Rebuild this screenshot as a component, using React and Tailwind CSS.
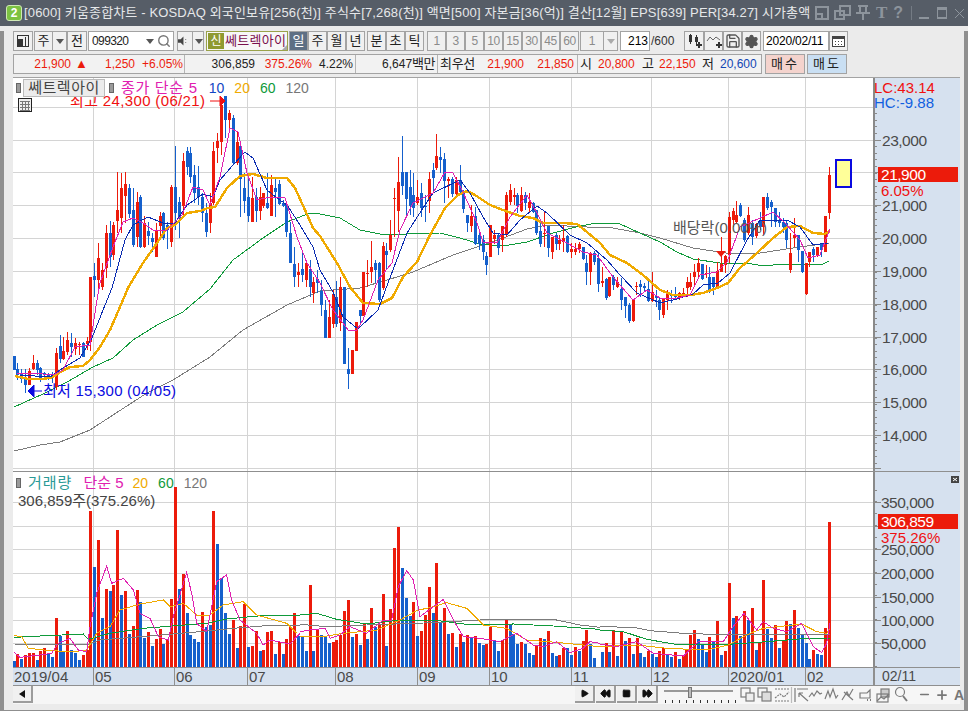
import { Search, Save, Settings, Play, Rewind, Square, FastForward, Minus, Plus } from 'lucide-react'

const RED = '#ec1b0b'
const BLUE = '#1560cc'
const ORANGE = '#f0aa00'
const GREEN = '#0f9a3a'
const GRAY = '#7c7c7c'
const NAVY = '#0a2bb0'
const PINK = '#e020b0'

// candles as they read in the 3x crops: [x, red?, bodyTop, bodyBottom, wickTop, wickBottom]
const candles7 = [[43,0,228,270,228,270],[52,0,268,285,250,300],[64,0,278,297,268,310],[76,0,295,315,268,340],[88,1,272,315,265,315],[100,1,250,268,225,270],[112,0,250,270,240,285],[121,0,265,300,262,305],[133,0,280,282,275,300],[145,0,285,297,280,300],[157,0,282,290,275,310],[169,1,220,320,205,330],[181,0,198,236,165,250],[190,1,212,236,170,240],[202,1,180,215,155,225],[214,0,190,200,160,230],[226,1,190,207,175,225],[238,1,192,194,185,225],[250,0,190,230,185,232],[262,1,183,192,170,210],[271,1,-10,185,-10,212]]
const candles6 = [[283,0,558,570,520,620],[295,1,505,570,460,600],[307,1,540,590,520,600],[319,1,430,535,405,565],[331,0,430,500,393,530],[340,1,405,495,395,510],[352,1,360,393,245,430],[364,1,293,385,250,430],[376,1,282,318,245,400],[388,0,295,372,283,385],[400,0,360,465,295,470],[412,1,336,440,307,470],[421,0,322,470,315,475],[433,1,400,470,378,475],[445,0,422,438,395,465],[457,0,445,455,430,485],[469,1,420,500,400,500],[481,1,378,408,365,445],[490,0,370,445,365,450],[502,0,405,420,395,478],[514,1,292,455,285,470],[526,0,290,370,168,420],[538,0,336,385,320,445],[550,1,213,348,188,380],[562,0,182,230,170,255],[571,0,190,262,170,280],[583,0,255,310,225,340],[595,0,292,320,228,345],[607,0,322,370,310,395],[619,0,370,425,340,440],[631,1,338,400,310,430],[640,1,183,340,155,345],[652,1,153,175,130,218],[664,1,45,155,20,195],[676,0,18,90,18,145],[688,1,70,90,60,130],[700,0,85,218,75,225],[712,1,155,218,125,225],[721,0,168,268,155,380],[733,0,295,332,250,370],[745,0,322,378,255,395],[757,1,325,395,262,395],[769,0,322,362,295,395],[781,1,320,362,290,390],[790,1,310,348,310,355],[802,0,340,355,248,358],[814,1,285,378,255,378],[826,0,295,305,265,380],[838,0,282,342,270,345],[850,0,340,348,330,350],[859,0,345,425,340,440],[871,0,430,520,395,520],[883,0,522,560,470,592],[895,1,545,555,520,590],[907,0,538,555,483,575],[919,1,520,570,518,590],[931,0,538,590,510,620],[940,1,575,610,560,640]]
const candles11 = [[7,0,27,38,0,70],[19,0,62,105,30,138],[31,0,120,204,90,204],[43,1,141,204,90,204],[55,1,72,162,60,175],[64,0,80,162,33,172],[76,1,52,160,20,182],[88,0,52,282,52,282],[100,0,297,312,234,357],[112,1,240,312,240,312],[124,1,156,242,156,242],[136,0,120,138,120,165],[145,1,6,138,6,138]]
const candles8 = [[142,1,458,459,420,500],[154,1,440,455,363,490],[166,0,430,450,420,490],[178,0,430,540,425,545],[190,1,378,505,365,510],[199,0,393,405,370,450],[211,1,345,390,300,395],[223,1,234,236,205,350],[235,1,187,272,112,335],[247,0,155,197,48,225],[259,0,155,237,155,285],[271,0,202,257,150,285],[280,0,225,265,160,290],[292,1,232,250,180,255],[304,0,220,265,190,290],[316,0,259,261,225,305],[328,1,178,243,155,280],[340,0,150,175,130,220],[349,1,108,145,42,150],[361,0,112,120,82,160],[373,0,118,182,100,248],[385,1,178,182,170,235],[397,0,178,222,170,230],[409,1,180,222,170,230],[421,0,180,215,135,218],[430,0,215,267,210,280],[442,0,285,310,285,335],[454,1,288,318,255,335],[466,0,288,372,260,375],[478,0,345,372,340,390],[490,0,360,395,345,420],[499,0,408,435,395,465],[511,1,315,410,315,410],[523,1,345,358,330,372],[535,0,345,385,340,405],[547,1,318,360,318,395],[559,1,225,345,215,350],[571,1,210,245,193,255],[583,1,226,230,205,255],[592,0,225,258,220,280],[604,1,225,272,202,275],[616,0,225,250,215,270],[628,1,245,265,220,275],[640,0,248,275,245,280],[649,0,270,340,270,345],[661,0,333,372,310,380],[673,1,339,341,275,380],[685,0,318,385,318,410],[697,1,352,395,350,418],[709,0,345,372,340,390],[718,1,360,372,345,390],[730,1,355,365,315,395],[742,0,348,395,345,400],[754,1,388,395,370,415],[766,1,388,396,370,405],[778,1,372,388,365,400],[790,0,382,417,380,420],[799,0,430,455,405,495],[811,1,400,455,395,495],[823,0,398,425,393,435],[835,0,415,493,400,515],[847,1,483,490,440,500],[859,0,477,533,475,540],[868,1,472,528,470,530],[880,0,472,495,465,510],[892,1,487,500,470,505],[904,0,507,540,475,570],[916,0,532,557,530,595],[928,0,555,603,550,610],[940,1,540,603,538,605],[949,1,499,501,485,525],[961,0,492,500,480,530],[973,0,498,503,490,515],[985,0,507,542,482,545],[997,1,515,542,457,545],[1009,0,528,534,510,560],[1018,0,540,570,530,600]]
const candles5 = [[10,1,475,525,475,535],[22,1,460,480,450,510],[34,0,462,468,450,490],[46,0,465,470,440,480],[58,1,460,473,455,480],[70,1,458,468,445,470],[82,1,425,445,410,470],[91,1,425,440,400,450],[103,1,395,410,373,440],[115,1,370,395,355,410],[127,0,372,418,372,420],[139,1,398,402,375,415],[148,0,410,457,380,460],[160,0,412,440,410,465],[172,1,393,443,365,445],[184,1,372,395,290,395],[196,1,348,375,345,400],[208,1,230,345,215,368],[220,1,212,240,205,262],[229,1,225,245,182,250],[241,0,195,228,190,230],[253,0,240,300,235,305],[265,1,225,280,202,285],[277,0,250,290,240,315],[289,1,252,288,250,295],[301,0,240,262,215,270],[310,1,170,260,170,285],[322,0,170,205,158,210],[334,0,185,200,180,260],[346,0,205,245,205,260],[358,0,240,250,215,260],[370,0,245,262,235,280],[379,0,250,300,240,325],[391,1,340,390,280,398],[403,1,285,295,235,320],[415,0,285,330,285,365],[427,0,333,397,333,400],[439,1,370,463,370,465],[448,1,335,365,335,380],[460,0,328,345,320,365],[472,1,320,345,320,350],[484,0,310,330,310,350],[496,1,228,335,228,335],[508,1,105,218,82,238]]

const toReal = (list, ox, oy) => list.map(([x, red, t, b, wt, wb]) => [
  Math.round(ox + x / 3), red, Math.round(oy + t / 3), Math.round(oy + b / 3), Math.round(oy + wt / 3), Math.round(oy + wb / 3),
])

const candles = [
  ...toReal(candles7, 0, 280),
  ...toReal(candles6, 0, 90),
  ...toReal(candles11, 315, 270),
  ...toReal(candles8, 320, 120),
  ...toReal(candles5, 660, 140),
]

const ma20 = '15,376 28,379 43,379 53,377 62,371 70,367 83,366 90,360 100,347 110,330 120,307 128,288 143,263 157,243 167,228 175,225 187,213 200,211 208,208 215,207 227,188 240,176 253,174 267,178 287,178 295,188 305,210 313,228 320,236 337,263 350,287 363,303 380,304 392,298 403,277 417,262 430,235 445,208 458,195 467,191 475,195 490,205 503,210 520,216 533,218 543,223 563,223 577,224 587,232 600,243 610,255 627,263 643,275 660,290 673,295 690,295 703,293 717,288 728,283 740,268 757,253 773,238 787,227 800,226 813,233 825,234 830,231'
const ma60 = '14,407 43,394 67,382 93,367 113,358 133,340 157,325 183,312 197,300 210,289 233,260 263,238 287,222 310,213 320,214 340,218 360,230 380,234 407,234 440,233 460,238 480,244 503,246 527,242 553,233 580,226 597,223 620,224 640,233 660,242 677,252 693,259 720,263 747,263 763,266 783,264 823,264 829,261'
const ma120 = '14,451 40,445 60,442 90,430 113,415 147,393 173,380 210,357 243,330 287,305 320,291 360,288 387,280 413,272 453,255 480,246 503,238 527,229 547,225 587,227 613,228 640,233 660,238 693,248 733,254 760,253 793,248 829,243'
const ma10 = '20,375 50,377 63,368 80,358 92,338 103,310 112,288 125,240 133,225 148,217 163,223 175,223 187,205 203,194 213,197 220,180 233,165 245,152 253,158 267,190 277,198 287,205 300,225 313,247 320,270 333,292 343,317 358,329 378,310 388,283 407,233 423,208 433,193 460,180 470,193 483,217 493,233 507,235 520,220 537,206 547,213 570,235 587,243 607,260 620,275 637,293 660,303 677,299 693,294 703,285 718,283 730,273 747,240 760,220 787,220 800,227 813,245 828,243'
const ma5 = '17,373 33,373 53,375 63,370 75,347 90,345 97,300 100,283 113,247 123,222 133,218 143,223 153,230 167,230 182,215 193,187 203,190 210,205 220,177 230,128 238,132 247,173 257,200 270,197 285,198 297,237 307,263 320,283 333,310 348,330 357,330 363,320 378,280 392,263 400,230 413,203 433,193 445,172 453,173 463,192 477,223 483,242 497,243 510,217 527,195 537,213 547,233 567,243 583,252 597,255 613,277 633,300 647,290 660,298 673,299 690,295 700,275 717,272 727,262 740,227 760,218 773,212 785,223 800,240 808,258 820,255 830,229'

// volume bars, 3x crop coordinates: [x, red?, top]
const vol3 = [[43,0,603],[52,1,582],[64,0,597],[76,1,585],[88,1,579],[100,1,579],[112,0,600],[121,1,573],[133,1,564],[145,0,582],[157,0,591],[169,1,474],[181,0,527],[190,0,572],[202,1,513],[214,0,570],[226,0,579],[238,0,600],[250,1,585],[262,1,570],[271,1,153],[283,0,321],[295,1,240],[307,0,474],[319,1,387],[331,0,393],[340,1,375],[352,1,210],[364,0,405],[376,1,393],[388,0,522],[400,1,498],[412,1,390],[421,0,427],[433,0,533],[445,1,516],[457,0,558],[469,1,537],[481,1,507],[490,0,552],[502,1,539],[514,1,417],[526,1,80],[538,0,387],[550,1,342],[562,0,459],[571,0,525],[583,0,537],[595,0,546],[607,1,456],[619,0,501],[631,0,495],[640,1,153],[652,0,252],[664,0,354],[676,0,459],[688,0,522],[700,1,480],[712,0,564],[721,1,498],[733,1,432],[745,0,561],[757,1,558],[769,1,513],[781,0,573],[790,1,570],[802,1,516],[814,1,513],[826,0,582],[838,1,546],[850,0,582],[859,1,537],[871,1,501],[883,1,459],[895,0,528]]
const vol9 = [[7,0,410],[19,0,453],[31,1,255],[40,0,453],[52,1,387],[64,0,405],[76,0,408],[88,0,429],[100,1,427],[109,1,420],[121,1,405],[133,1,333],[145,1,300],[157,0,411],[169,1,402],[181,0,435],[193,1,372],[202,0,417],[214,1,324],[226,0,381],[238,1,375],[250,1,282],[259,0,438],[271,1,327],[283,1,144],[295,1,81],[307,0,204],[319,0,294],[331,0,348],[340,1,306],[352,0,408],[364,1,393],[376,1,345],[388,1,261],[400,0,339],[409,1,189],[421,0,366],[433,1,324],[445,0,402],[457,1,399],[469,0,441],[481,1,402],[490,0,426],[502,1,405],[514,0,414],[526,1,408],[538,0,429],[550,0,435],[559,1,432],[571,1,381],[583,0,420],[595,0,453],[607,1,420],[619,1,360],[631,0,372],[640,0,402],[652,0,432],[664,1,426],[676,0,432],[688,0,459],[700,0,465],[709,1,435],[721,1,414],[733,0,417],[745,1,393],[757,0,459],[769,0,468],[778,1,465],[790,1,444],[802,0,444],[814,0,465],[826,1,441],[838,0,453],[850,1,423],[859,1,390],[871,0,432],[883,0,474]]
const vol10 = [[7,0,456],[19,1,429],[28,0,456],[40,1,390],[52,0,468],[64,1,393],[76,0,423],[88,1,414],[100,0,462],[112,1,414],[121,0,459],[133,0,471],[145,1,453],[157,0,462],[169,0,471],[178,1,453],[190,1,444],[202,0,465],[214,0,471],[226,1,456],[238,0,477],[250,1,465],[259,1,450],[271,1,405],[283,1,390],[295,0,417],[307,0,435],[319,0,456],[328,1,411],[340,0,426],[352,1,363],[364,0,465],[376,1,453],[388,1,249],[400,0,354],[409,1,348],[421,0,408],[433,1,333],[445,0,360],[457,1,324],[469,0,450],[478,1,426],[490,1,240],[502,0,387],[514,0,414],[526,1,375],[538,0,444],[550,1,423],[559,1,363],[571,0,372],[583,1,330],[595,0,384],[607,0,402],[619,0,429],[628,0,477],[640,1,450],[652,0,462],[664,0,465],[676,1,384],[688,1,66]]

const barsOf = (list, ox, oy) => list.map(([x, red, t]) => [Math.round(ox + x / 3), red, Math.round(oy + t / 3)])
const volumes = [...barsOf(vol3, 0, 460), ...barsOf(vol9, 300, 500), ...barsOf(vol10, 600, 500)]

const linePts = (a, ox, oy) => a.map(([x, y]) => `${ox + x / 3},${oy + y / 3}`).join(' ')
const volLines = {
  pink: [
    [[43,578],[60,592],[120,585],[155,580],[175,550],[210,535],[235,570],[260,575],[270,500],[290,400],[320,318],[335,370],[370,355],[400,390],[420,460],[450,475],[475,530],[505,540],[520,470],[560,338],[575,400],[590,490],[620,515],[650,365],[680,345],[695,420],[720,480],[770,520],[790,555],[810,540],[870,552],[900,520]],
    [[0,395],[30,390],[75,385],[90,415],[120,405],[150,380],[200,400],[250,360],[275,360],[295,260],[320,212],[340,240],[360,350],[400,320],[430,298],[460,360],[490,410],[540,415],[600,425],[650,400],[700,435],[730,440],[770,425],[810,458],[850,445],[870,425],[900,430]],
    [[0,432],[50,440],[110,425],[160,460],[250,468],[295,425],[370,425],[395,385],[432,340],[470,390],[490,365],[520,385],[560,395],[605,370],[640,440],[665,458],[680,430],[690,370]],
  ],
  orange: [
    [[43,527],[65,530],[85,565],[150,572],[220,575],[260,570],[290,520],[330,500],[360,450],[420,432],[490,420],[510,440],[550,430],[590,465],[630,465],[670,435],[730,425],[770,465],[860,490],[890,520]],
    [[0,408],[80,408],[130,400],[230,390],[300,360],[350,332],[400,320],[440,308],[500,325],[550,375],[620,385],[680,420],[780,428],[900,440]],
    [[0,440],[110,435],[200,445],[320,450],[385,435],[450,400],[490,385],[605,372],[650,395],[680,400],[690,385]],
  ],
  green: [
    [[43,532],[120,528],[250,522],[265,538],[330,520],[430,505],[530,497],[620,490],[680,477],[750,470],[800,466],[900,466]],
    [[0,345],[50,340],[110,358],[200,372],[300,360],[400,360],[500,373],[640,372],[760,378],[900,388]],
    [[0,390],[70,395],[140,418],[240,435],[400,432],[500,425],[620,415],[690,415]],
  ],
  gray: [
    [[43,552],[260,555],[300,540],[450,528],[600,515],[700,505],[800,497],[900,497]],
    [[0,373],[80,380],[200,375],[400,368],[540,360],[760,358],[840,375],[900,382]],
    [[0,380],[100,382],[150,392],[250,400],[400,405],[690,403]],
  ],
}
const origins = [[0, 460], [300, 500], [600, 500]]

const gridX = [93, 174, 247, 335, 417, 489, 571, 651, 728, 805]
const priceY = [107, 140, 172, 205, 238, 271, 304, 337, 369, 402, 435, 468]
const volY = [502, 526, 549, 573, 597, 620, 643]
const priceLabels = [['23,000', 140], ['22,000', 172], ['21,000', 205], ['20,000', 238], ['19,000', 271], ['18,000', 304], ['17,000', 337], ['16,000', 369], ['15,000', 402], ['14,000', 435]]
const volLabels = [['350,000', 502], ['250,000', 549], ['200,000', 573], ['150,000', 597], ['100,000', 620], ['50,000', 643]]
const months = [['2019/04', 80], ['05', 81], ['06', 73], ['07', 88], ['08', 82], ['09', 72], ['10', 82], ['11', 80], ['12', 77], ['2020/01', 77], ['02', 68]]

function Btn({ children, className = '' }) {
  return <div className={`flex items-center justify-center h-5 shrink-0 bg-[#f0f0f0] border border-[#a3a3a3] text-[13px] text-[#222] ${className}`}>{children}</div>
}

function Arrow({ color = '#555' }) {
  return <div className="w-0 h-0 border-x-[4px] border-x-transparent border-t-[5px]" style={{ borderTopColor: color }} />
}

function Dot() {
  return <div className="w-[5px] h-[10px] bg-[#9a9a9a] border border-[#666]" />
}

function TitleBar() {
  return (
    <div className="h-[26px] bg-[#565d67] flex items-center pl-[6px] text-[#e6e8ea] text-[13px] whitespace-nowrap">
      <div className="w-4 h-4 shrink-0 rounded-[3px] bg-[#7cc242] border border-[#cfe8b5] flex items-center justify-center text-white text-[12px] font-bold">2</div>
      <span className="ml-[2px] w-[786px] shrink-0 tracking-[0.15px]">[0600] 키움종합차트 - KOSDAQ 외국인보유[256(천)] 주식수[7,268(천)] 액면[500] 자본금[36(억)] 결산[12월] EPS[639] PER[34.27] 시가총액</span>
      <svg width="58" height="20" viewBox="0 0 58 20" className="ml-[4px] shrink-0" fill="none" stroke="#8d949c" strokeWidth="1.5" shapeRendering="crispEdges">
        <rect x="2" y="4" width="12" height="12" />
        <path d="M2 11h6v5" />
        <rect x="26" y="3" width="10" height="9" />
        <rect x="21" y="8" width="9" height="8" />
        <path d="M44 3h10M46 3v7h6V3M42 10h14" />
        <path d="M49 10v7" />
      </svg>
      <span className="ml-[4px] text-[#8d949c] text-[17px] font-['Liberation_Serif',serif] font-bold">T</span>
      <span className="ml-[6px] text-[#8d949c] text-[16px] font-bold">?</span>
      <svg width="54" height="20" viewBox="0 0 54 20" className="ml-[7px] shrink-0" fill="none" stroke="#8d949c" shapeRendering="crispEdges">
        <path d="M1.5 3v14" stroke="#747b84" />
        <path d="M9 15h10" strokeWidth="2" />
        <rect x="27.5" y="6" width="9" height="9" strokeWidth="1.5" />
        <path d="M27 5h10" strokeWidth="2" />
        <path d="M45 6l9 9M54 6l-9 9" strokeWidth="1" shapeRendering="auto" />
      </svg>
    </div>
  )
}

function Toolbar() {
  return (
    <div className="mt-[5px] flex h-5 items-center whitespace-nowrap">
      <Btn className="w-5">
        <svg width="14" height="14" viewBox="0 0 14 14" shapeRendering="crispEdges">
          <rect x="1.5" y="1.5" width="11" height="11" fill="none" stroke="#333" />
          <rect x="2" y="5" width="5" height="7" fill="#333" />
          <path d="M9 3v9" stroke="#333" />
        </svg>
      </Btn>
      <Btn className="ml-px w-[33px]">
        <span className="flex-1 text-center">주</span>
        <span className="w-[14px] h-full flex items-center justify-center border-l border-[#a3a3a3]"><Arrow /></span>
      </Btn>
      <Btn className="w-5">전</Btn>
      <div className="ml-px h-5 w-[86px] shrink-0 flex items-center bg-white border border-[#a3a3a3] text-[12px] text-[#222]">
        <span className="pl-[3px] w-[54px] tracking-[-0.6px]">099320</span>
        <span className="w-[14px] flex justify-center"><Arrow /></span>
        <Search size={14} color="#777" strokeWidth={2.4} />
      </div>
      <Btn className="ml-[3px] w-[27px]">
        <svg width="11" height="12" viewBox="0 0 11 12" className="mr-px"><path d="M0 4h3l3-3v10L3 8H0z" fill="#444" /><path d="M8 4h1v1H8zM8 7h1v1H8z" fill="#444" /></svg>
        <span className="ml-[3px] border-l border-[#a3a3a3] h-full flex items-center pl-[2px]"><Arrow /></span>
      </Btn>
      <div className="ml-[2px] h-5 w-[82px] shrink-0 flex items-center bg-[#f7f7f7] border border-[#9aa24a] relative">
        <div className="ml-px w-4 h-4 bg-[#8f9a30] text-white text-[12px] flex items-center justify-center">신</div>
        <span className="ml-px text-[13px] text-[#7a0f4e] tracking-[0.3px]">쎄트렉아이</span>
        <div className="absolute right-0 bottom-0 w-0 h-0 border-l-[5px] border-l-transparent border-b-[5px] border-b-[#aaa]" />
      </div>
      <div className="ml-px flex">
        <Btn className="w-[19px] !bg-[#5e6f84] !text-white">일</Btn>
        <Btn className="w-[19px]">주</Btn>
        <Btn className="w-[19px]">월</Btn>
        <Btn className="w-[19px]">년</Btn>
      </div>
      <div className="ml-[2px] flex">
        <Btn className="w-[19px]">분</Btn>
        <Btn className="w-[19px]">초</Btn>
        <Btn className="w-[19px]">틱</Btn>
      </div>
      <div className="ml-[3px] flex">
        {['1', '3', '5', '10', '15', '30', '45', '60'].map(n => <Btn key={n} className="w-[19px] !text-[#8b8b8b] !text-[12px] tracking-[-0.5px]">{n}</Btn>)}
      </div>
      <Btn className="ml-px w-[38px] !text-[#8b8b8b] !text-[12px]">
        <span className="flex-1 text-center">1</span>
        <span className="w-[14px] h-full flex items-center justify-center border-l border-[#a3a3a3]"><Arrow color="#aaa" /></span>
      </Btn>
      <div className="ml-[2px] w-[30px] h-5 shrink-0 bg-white border border-[#a3a3a3] text-[12px] text-right pr-px leading-[18px]">213</div>
      <span className="ml-px w-[33px] text-[12px] text-[#333]">/600</span>
      <div className="flex">
        <Btn className="w-5">
          <svg width="16" height="14" viewBox="0 0 16 14" shapeRendering="crispEdges"><path d="M3 1h3v7H3zM9 3h3v5H9z" fill="#333" /><path d="M4.5 0v10M10.5 1v9" stroke="#333" /><path d="M10 11h6M13 8v6" stroke="#333" strokeWidth="2" /></svg>
        </Btn>
        <Btn className="w-[19px]">
          <svg width="16" height="14" viewBox="0 0 16 14"><path d="M1 7l3-4 3 3 3-3 4 3" fill="none" stroke="#666" /><path d="M10 11h6M13 8v6" stroke="#333" strokeWidth="2" /></svg>
        </Btn>
        <Btn className="w-[19px]"><Save size={16} color="#555" strokeWidth={2} /></Btn>
        <Btn className="w-[19px]"><Settings size={15} color="#555" fill="#555" strokeWidth={2} /></Btn>
      </div>
      <div className="ml-[2px] h-5 w-[66px] shrink-0 bg-white border border-[#a3a3a3] text-[12px] leading-[18px] pl-[2px] tracking-[-0.2px]">2020/02/11</div>
      <Btn className="w-[19px]">
        <svg width="13" height="12" viewBox="0 0 13 12" shapeRendering="crispEdges"><rect x="0.5" y="1.5" width="12" height="10" fill="#fff" stroke="#444" /><path d="M1 2h11v2H1z" fill="#444" /><path d="M3 6h1M6 6h1M9 6h1M3 9h1M6 9h1M9 9h1" stroke="#444" /></svg>
      </Btn>
    </div>
  )
}

function Cell({ w, color = 'text-[#ec1b0b]', right, children }) {
  return <span className={`block shrink-0 ${color} ${right ? 'text-right' : ''}`} style={{ width: w }}>{children}</span>
}

function InfoBar() {
  return (
    <div className="mt-[3px] flex h-5 items-center whitespace-nowrap">
      <div className="flex h-5 w-[749px] shrink-0 items-center bg-[#f2f2f2] border border-[#a3a3a3] text-[12px] leading-[18px]">
        <div className="flex w-[171px] h-full border-r border-[#b5b5b5]">
          <Cell w={57} right>21,900</Cell>
          <span className="ml-[4px] w-[12px] text-[#ec1b0b] text-[13px] leading-[17px]">▲</span>
          <Cell w={48} right>1,250</Cell>
          <Cell w={48} right>+6.05%</Cell>
        </div>
        <div className="flex w-[171px] h-full border-r border-[#b5b5b5]">
          <Cell w={70} color="text-[#222]" right>306,859</Cell>
          <Cell w={57} right>375.26%</Cell>
          <Cell w={41} color="text-[#222]" right>4.22%</Cell>
        </div>
        <div className="flex w-[82px] h-full border-r border-[#b5b5b5]">
          <Cell w={79} color="text-[#222]" right>6,647<span className="text-[13px] tracking-[-0.5px]">백만</span></Cell>
        </div>
        <span className="ml-[2px] w-[38px] text-[13px] text-[#222] tracking-[-0.3px]">최우선</span>
        <div className="flex h-full w-[100px] border-r border-[#b5b5b5]">
          <Cell w={46} right>21,900</Cell>
          <Cell w={50} right>21,850</Cell>
        </div>
        <span className="ml-[2px] w-[18px] text-[13px] text-[#222]">시</span>
        <Cell w={36}>20,800</Cell>
        <span className="ml-2 w-[17px] text-[13px] text-[#222]">고</span>
        <Cell w={36}>22,150</Cell>
        <span className="ml-[7px] w-[18px] text-[13px] text-[#222]">저</span>
        <Cell w={36} color="text-[#1146b4]">20,600</Cell>
      </div>
      <div className="ml-[3px] h-5 w-10 shrink-0 bg-[#f4d3cd] border border-[#a3a3a3] flex items-center justify-center text-[13px] text-[#222] tracking-[2px]">매수</div>
      <div className="ml-[2px] h-5 w-10 shrink-0 bg-[#c9dff3] border border-[#a3a3a3] flex items-center justify-center text-[13px] text-[#222] tracking-[2px]">매도</div>
    </div>
  )
}

function PricePlot() {
  return (
    <svg width="860" height="393" viewBox="13 78 860 393" className="block shrink-0">
      <g stroke="#d4d4d4" strokeWidth="1" shapeRendering="crispEdges">
        {priceY.map(y => <line key={y} x1="13" x2="873" y1={y + 0.5} y2={y + 0.5} />)}
        {gridX.map(x => <line key={x} x1={x + 0.5} x2={x + 0.5} y1="78" y2="471" />)}
      </g>
      <g fill="none" shapeRendering="crispEdges">
        <polyline points={ma120} stroke={GRAY} />
        <polyline points={ma60} stroke={GREEN} />
      </g>
      <g shapeRendering="crispEdges">
        {candles.map(([x, red, t, b, wt, wb], i) => (
          <g key={i} fill={red ? RED : BLUE}>
            <rect x={x} y={wt} width="1" height={Math.max(wb - wt, 1)} />
            <rect x={x - 1} y={t} width="3" height={Math.max(b - t, 1)} />
          </g>
        ))}
      </g>
      <g fill="none" shapeRendering="crispEdges">
        <polyline points={ma20} stroke={ORANGE} strokeWidth="2.4" />
        <polyline points={ma10} stroke={NAVY} />
        <polyline points={ma5} stroke={PINK} />
      </g>
      <text x="70" y="106" fontSize="15" fill="#f01010" textLength="135">최고 24,300 (06/21)</text>
      <path d="M210 101h10M220 96l5 5-5 5z" stroke="#f01010" fill="#f01010" />
      <path d="M42 391H34M34 385l-6 6 6 6z" stroke="#0a0ae0" fill="#0a0ae0" />
      <text x="43" y="396" fontSize="15" fill="#0a0ae0" textLength="133">최저 15,300 (04/05)</text>
      <text x="673" y="233" fontSize="15" fill="#555">배당락(0.00%)</text>
      <path d="M716 251h10l-5 6z" fill={RED} />
      <rect x="836" y="160" width="15" height="27" fill="#ffff99" stroke="#0a0ae0" strokeWidth="2" shapeRendering="crispEdges" />
    </svg>
  )
}

function PriceAxis() {
  const minor = Array.from({ length: 60 }, (_, i) => 107 + i * 6.6)
  return (
    <svg width="87" height="393" viewBox="873 78 87 393" className="block shrink-0 bg-[#d6e1ef]">
      <g stroke="#8a8a8a" shapeRendering="crispEdges">
        <line x1="873.5" x2="873.5" y1="78" y2="471" strokeWidth="2" />
        {minor.filter(y => y < 468 && y > 108).map(y => <line key={y} x1="873" x2="877" y1={y} y2={y} />)}
        {priceY.slice(1).map(y => <line key={y} x1="873" x2="881" y1={y + 0.5} y2={y + 0.5} />)}
      </g>
      <g fontSize="15.5" fill="#4a4a4a">
        {priceLabels.map(([t, y]) => <text key={t} x="882" y={y + 5.5} textLength="45">{t}</text>)}
      </g>
      <text x="874" y="93" fontSize="15" fill="#f01010">LC:43.14</text>
      <text x="874" y="108" fontSize="15" fill="#1160e0">HC:-9.88</text>
      <rect x="878" y="167" width="80" height="15" fill={RED} shapeRendering="crispEdges" />
      <text x="881" y="180" fontSize="15.5" fill="#fff" textLength="45">21,900</text>
      <text x="881" y="196" fontSize="15" fill="#f01010">6.05%</text>
    </svg>
  )
}

function VolumePlot() {
  return (
    <svg width="860" height="195" viewBox="13 472 860 195" className="block shrink-0">
      <g stroke="#d4d4d4" shapeRendering="crispEdges">
        {volY.map(y => <line key={y} x1="13" x2="873" y1={y + 0.5} y2={y + 0.5} />)}
        {gridX.map(x => <line key={x} x1={x + 0.5} x2={x + 0.5} y1="472" y2="667" />)}
      </g>
      <g shapeRendering="crispEdges">
        {volumes.map(([x, red, top], i) => (
          <rect key={i} x={x - 1} y={top} width="3" height={667 - top} fill={red ? RED : BLUE} />
        ))}
      </g>
      <g fill="none" shapeRendering="crispEdges">
        {origins.map(([ox, oy], i) => <polyline key={i} points={linePts(volLines.gray[i], ox, oy)} stroke={GRAY} />)}
        {origins.map(([ox, oy], i) => <polyline key={i} points={linePts(volLines.green[i], ox, oy)} stroke={GREEN} />)}
        {origins.map(([ox, oy], i) => <polyline key={i} points={linePts(volLines.orange[i], ox, oy)} stroke={ORANGE} />)}
        {origins.map(([ox, oy], i) => <polyline key={i} points={linePts(volLines.pink[i], ox, oy)} stroke={PINK} />)}
      </g>
    </svg>
  )
}

function VolumeAxis() {
  const minor = Array.from({ length: 16 }, (_, i) => 490 + i * 11.75)
  return (
    <svg width="87" height="195" viewBox="873 472 87 195" className="block shrink-0 bg-[#d6e1ef]">
      <g stroke="#8a8a8a" shapeRendering="crispEdges">
        <line x1="873.5" x2="873.5" y1="472" y2="667" strokeWidth="2" />
        {minor.map(y => <line key={y} x1="873" x2="877" y1={y} y2={y} />)}
        {volY.map(y => <line key={y} x1="873" x2="881" y1={y + 0.5} y2={y + 0.5} />)}
      </g>
      <g fontSize="15.5" fill="#4a4a4a">
        {volLabels.map(([t, y]) => <text key={t} x="881" y={y + 5.5} textLength={t.length === 7 ? 53 : 45}>{t}</text>)}
      </g>
      <rect x="878" y="514" width="80" height="15" fill={RED} shapeRendering="crispEdges" />
      <text x="881" y="527" fontSize="15.5" fill="#fff" textLength="53">306,859</text>
      <text x="881" y="543" fontSize="15" fill="#f01010">375.26%</text>
    </svg>
  )
}

function DateAxis() {
  return (
    <div className="flex h-[19px] bg-[#d6e1ef] border-t border-b border-[#8f8f8f] text-[15px] leading-[17px] text-[#4a4a4a]">
      {months.map(([m, w], i) => (
        <div key={m} className={`pl-px shrink-0 overflow-hidden ${i === 0 ? '' : 'border-l border-[#8f8f8f]'}`} style={{ width: w }}>{m}</div>
      ))}
      <div className="flex-1 border-l-2 border-[#8f8f8f] pl-[7px] text-[14px]">02/11</div>
    </div>
  )
}

function PlayBtn({ children }) {
  return <div className="w-5 h-[17px] shrink-0 bg-[#f0f0f0] border-r-2 border-b-2 border-[#9c9c9c] flex items-center justify-center">{children}</div>
}

function BottomBar() {
  return (
    <div className="flex h-[18px] items-start bg-[#f6f6f6]">
      <PlayBtn><svg width="6" height="8"><path d="M6 0v8L0 4z" fill="#111" /></svg></PlayBtn>
      <div className="w-[542px] shrink-0" />
      <div className="flex gap-px shrink-0">
        <PlayBtn><Play size={9} fill="#111" color="#111" /></PlayBtn>
        <PlayBtn><Rewind size={11} fill="#111" color="#111" /></PlayBtn>
        <PlayBtn><Square size={9} fill="#111" color="#111" /></PlayBtn>
        <PlayBtn><FastForward size={11} fill="#111" color="#111" /></PlayBtn>
      </div>
      <svg width="74" height="18" viewBox="0 0 74 18" className="ml-[5px] shrink-0" shapeRendering="crispEdges">
        <rect x="1" y="4" width="69" height="2" fill="#999" />
        <rect x="25" y="1" width="3" height="10" fill="#bbb" stroke="#777" />
        {Array.from({ length: 11 }, (_, i) => <rect key={i} x={2 + i * 7} y="14" width="1" height="3" fill="#333" />)}
      </svg>
      <svg width="174" height="18" viewBox="0 0 174 18" className="shrink-0" fill="none" stroke="#7b7b7b" strokeWidth="1.2">
        <rect x="4" y="2" width="9" height="9" /><rect x="9" y="7" width="8" height="8" fill="#eee" />
        <rect x="21" y="2" width="9" height="9" /><rect x="25" y="6" width="9" height="9" fill="#ddd" />
        <path d="M38 12l5-4 4 3 5-5M38 3h14M38 15h14" strokeDasharray="2 1" />
        <path d="M54.5 1v16" stroke="#bbb" />
        <path d="M58 2v14M60 3h11M62 7l9 8M62 7v4M62 7h4" />
        <path d="M72 11l3-4 2 3 3-5 3 3 2-1" />
        <path d="M88 13l3-8 2 6 3-8 3 9 2-3" />
        <path d="M105 14l5-8 2 4 4-7M107 6l9 8" />
        <path d="M123 7h7l3-3v8h-10z" /><path d="M130 14h1M133 14h1" strokeWidth="2" />
        <rect x="144" y="3" width="8" height="8" fill="#ccc" /><path d="M140 15l4-4 3 2 5-5" /><rect x="140" y="8" width="11" height="8" />
        <circle cx="163" cy="6" r="4.5" /><path d="M166 10l4 5" strokeWidth="2" />
      </svg>
      <div className="flex items-center h-[17px] ml-[7px] gap-[4px] text-[#777]">
        <Minus size={13} strokeWidth={3} />
        <Plus size={14} strokeWidth={3} />
        <span className="ml-px text-[14px] font-bold leading-none">A</span>
      </div>
    </div>
  )
}

export default function App() {
  return (
    <div className="w-[968px] h-[711px] overflow-hidden bg-[#ebebeb] font-['Liberation_Sans','Noto_Sans_CJK_KR',sans-serif]">
      <TitleBar />
      <div className="h-[685px] border-x-4 border-b-[6px] border-[#8f8f8f] pl-[9px] pr-[4px]">
        <Toolbar />
        <InfoBar />
        <div className="mt-[3px] border-t border-[#a3a3a3] bg-white relative">
          <div className="flex">
            <PricePlot />
            <PriceAxis />
          </div>
          <div className="h-px bg-[#8f8f8f]" />
          <div className="flex">
            <VolumePlot />
            <VolumeAxis />
          </div>
          <DateAxis />

          <div className="absolute left-[3px] top-px flex items-center h-[18px] text-[15px] whitespace-nowrap">
            <Dot />
            <div className="ml-[2px] h-[18px] w-[82px] bg-[#ececec] border border-[#bbb] flex items-center justify-center text-[#444] tracking-[0.5px]">쎄트렉아이</div>
            <div className="ml-[4px]"><Dot /></div>
            <span className="ml-[7px] text-[#e020b0] tracking-[0.7px]">종가 단순 5</span>
            <span className="ml-[11px] text-[#1146c4] text-[14px]">10</span>
            <span className="ml-[10px] text-[#f0aa00] text-[14px]">20</span>
            <span className="ml-[10px] text-[#0f9a3a] text-[14px]">60</span>
            <span className="ml-[10px] text-[#777] text-[14px]">120</span>
          </div>
          <svg className="absolute left-[5px] top-[20px]" width="14" height="14" viewBox="0 0 14 14" shapeRendering="crispEdges">
            <rect x="0.5" y="0.5" width="13" height="13" fill="#eee" stroke="#222" />
            <path d="M2 3.5h10M2 6.5h10M2 9.5h10M2 12h10M4.5 3v9M7.5 3v9M10.5 3v9" stroke="#777" />
          </svg>
          <div className="absolute left-[3px] top-[396px] flex items-center h-[18px] text-[15px] whitespace-nowrap">
            <Dot />
            <span className="ml-[7px] text-[#2a9a96] tracking-[1px]">거래량</span>
            <span className="ml-[11px] text-[#e020b0]">단순 5</span>
            <span className="ml-[9px] text-[#f0aa00] text-[14px]">20</span>
            <span className="ml-[10px] text-[#0f9a3a] text-[14px]">60</span>
            <span className="ml-[10px] text-[#777] text-[14px]">120</span>
          </div>
          <div className="absolute left-[5px] top-[412px] text-[15px] text-[#444] whitespace-nowrap">306,859주(375.26%)</div>
          <svg className="absolute left-[938px] top-[398px]" width="8" height="7" viewBox="0 0 8 7">
            <rect width="8" height="7" fill="#444" />
            <path d="M2 2l4 3M6 2L2 5" stroke="#fff" />
          </svg>
        </div>
        <BottomBar />
      </div>
    </div>
  )
}
